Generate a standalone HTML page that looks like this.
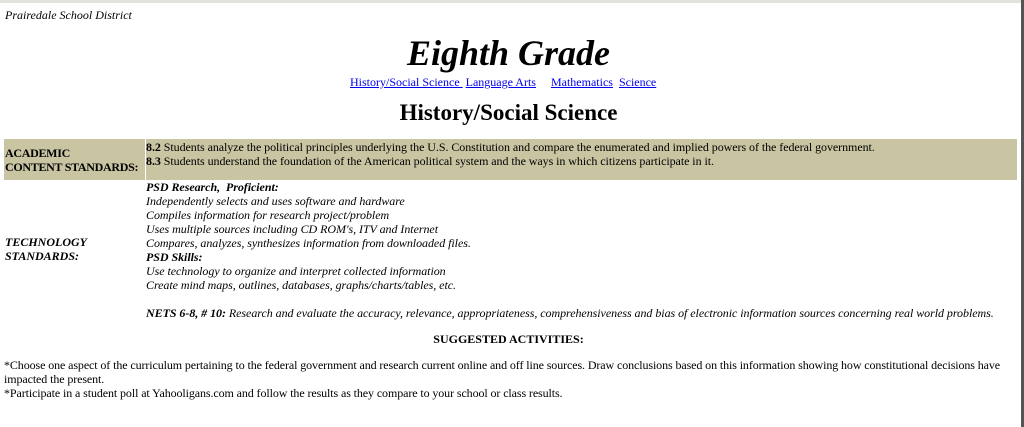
<!DOCTYPE html>
<html><head><style>
html,body{margin:0;padding:0;width:1024px;height:427px;overflow:hidden;background:#fff;position:relative;font-family:"Liberation Serif",serif;font-size:12px;color:#000}
div{position:absolute;white-space:nowrap;line-height:14px}
a{color:#0000ee;text-decoration:underline}
.i{font-style:italic}
</style></head><body>
<div style="left:0;top:0;width:1024px;height:3px;background:#e2e2da"></div>
<div style="left:1021px;top:0;width:3px;height:427px;background:#555"></div>
<div class="i" style="left:5px;top:8px;font-size:12px">Prairedale School District</div>
<div style="left:0;width:1017px;top:33px;text-align:center;font-size:36px;line-height:40px;font-weight:bold;font-style:italic">Eighth Grade</div>
<div style="left:350px;top:75px"><a>History/Social Science </a>&nbsp;<a>Language Arts</a>&nbsp;&nbsp;&nbsp;&nbsp; <a>Mathematics</a>&nbsp; <a>Science</a></div>
<div style="left:0;width:1017px;top:99px;text-align:center;font-size:23px;line-height:28px;font-weight:bold">History/Social Science</div>
<div style="left:4px;top:139px;width:141px;height:41px;background:#c9c4a2"></div>
<div style="left:146px;top:139px;width:871px;height:41px;background:#c9c4a2"></div>
<div style="left:5px;top:146px;font-weight:bold;font-size:12px;letter-spacing:-0.3px;line-height:14px">ACADEMIC<br>CONTENT STANDARDS:</div>
<div style="left:146px;top:140px;letter-spacing:-0.06px"><b>8.2</b> Students analyze the political principles underlying the U.S. Constitution and compare the enumerated and implied powers of the federal government.<br><b>8.3</b> Students understand the foundation of the American political system and the ways in which citizens participate in it.</div>
<div class="i" style="left:5px;top:235px;font-weight:bold">TECHNOLOGY<br>STANDARDS:</div>
<div class="i" style="left:146px;top:180px;letter-spacing:-0.05px"><b>PSD Research, &nbsp;Proficient:</b><br>Independently selects and uses software and hardware<br>Compiles information for research project/problem<br>Uses multiple sources including CD ROM's, ITV and Internet<br>Compares, analyzes, synthesizes information from downloaded files.<br><b>PSD Skills:</b><br>Use technology to organize and interpret collected information<br>Create mind maps, outlines, databases, graphs/charts/tables, etc.<br><br><b>NETS 6-8, # 10:</b> Research and evaluate the accuracy, relevance, appropriateness, comprehensiveness and bias of electronic information sources concerning real world problems.</div>
<div style="left:0;width:1017px;top:332px;text-align:center;font-weight:bold">SUGGESTED ACTIVITIES:</div>
<div style="left:4px;top:358px;white-space:normal;width:1016px;letter-spacing:-0.1px">*Choose one aspect of the curriculum pertaining to the federal government and research current online and off line sources. Draw conclusions based on this information showing how constitutional decisions have impacted the present.<br>*Participate in a student poll at Yahooligans.com and follow the results as they compare to your school or class results.</div>
</body></html>
